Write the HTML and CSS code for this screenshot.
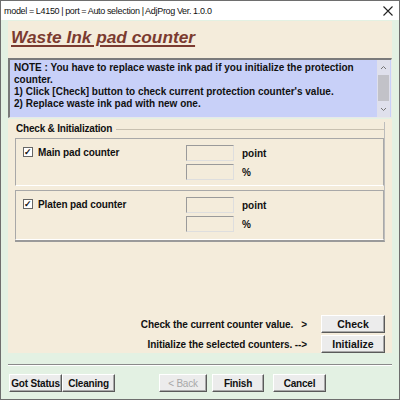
FILE: index.html
```html
<!DOCTYPE html>
<html>
<head>
<meta charset="utf-8">
<link rel="stylesheet" href="styles.css">
</head>
<body>
<div class="window">
  <div class="titlebar">
    <span class="title">model = L4150 | port = Auto selection | AdjProg Ver. 1.0.0</span>
    <svg class="close" width="10" height="10" viewBox="0 0 10 10"><path d="M0.5 0.5 L9.5 9.5 M9.5 0.5 L0.5 9.5" stroke="#222" stroke-width="1.1" fill="none"/></svg>
  </div>
  <div class="content">
    <div class="header"><span class="heading">Waste Ink pad counter</span></div>
    <div class="notice">
      <div class="notice-text">NOTE : You have to replace waste ink pad if you initialize the protection counter.<br>1) Click [Check] button to check current protection counter's value.<br>2) Replace waste ink pad with new one.</div>
      <div class="scrollbar">
        <svg width="13" height="10" viewBox="0 0 13 10"><path d="M4 6 L6.5 3.5 L9 6" stroke="#777" stroke-width="1" fill="none"/></svg>
        <div class="thumb"></div>
        <div class="track"></div>
        <svg width="13" height="10" viewBox="0 0 13 10"><path d="M4 4 L6.5 6.5 L9 4" stroke="#777" stroke-width="1" fill="none"/></svg>
      </div>
    </div>
    <div class="panel">
      <div class="group">
        <div class="group-label">Check &amp; Initialization</div>
        <div class="sub">
          <label class="chk"><span class="box">✓</span>Main pad counter</label>
          <div class="fields">
            <div class="field"><span class="input"></span><span class="unit">point</span></div>
            <div class="field"><span class="input"></span><span class="unit">%</span></div>
          </div>
        </div>
        <div class="sub">
          <label class="chk"><span class="box">✓</span>Platen pad counter</label>
          <div class="fields">
            <div class="field"><span class="input"></span><span class="unit">point</span></div>
            <div class="field"><span class="input"></span><span class="unit">%</span></div>
          </div>
        </div>
      </div>
      <div class="actions">
        <div class="action"><span>Check the current counter value.&nbsp;&nbsp;&nbsp;&gt;</span><button class="btn wide">Check</button></div>
        <div class="action"><span>Initialize the selected counters. --&gt;</span><button class="btn wide">Initialize</button></div>
      </div>
    </div>
    <div class="separator"></div>
    <div class="footer">
      <button class="btn">Got Status</button>
      <button class="btn">Cleaning</button>
      <button class="btn back" disabled>&lt; Back</button>
      <button class="btn finish">Finish</button>
      <button class="btn cancel">Cancel</button>
    </div>
  </div>
</div>
</body>
</html>
```
FILE: styles.css
```css
* { box-sizing: border-box; }
html, body { margin: 0; padding: 0; }
body {
  width: 400px;
  height: 400px;
  font-family: "Liberation Sans", Arial, sans-serif;
  font-size: 10px;
  color: #111;
}
.window {
  width: 400px;
  height: 400px;
  border: 1px solid #6e6e6e;
  background: #e3f1e3;
  display: flex;
  flex-direction: column;
}
.titlebar {
  height: 19px;
  background: #fff;
  display: flex;
  align-items: center;
  justify-content: space-between;
  padding: 0 6px 0 3px;
  font-size: 9px;
  color: #111;
}
.title { letter-spacing: -0.3px; word-spacing: -0.3px; }
.content {
  padding: 0 7px;
  display: flex;
  flex-direction: column;
}
.header {
  margin-top: 1px;
  height: 37px;
  background: #f4ecdb;
  padding: 6px 0 0 3px;
}
.heading {
  font-size: 17.3px;
  font-weight: bold;
  font-style: italic;
  color: #7b3b30;
  text-decoration: underline;
  text-decoration-thickness: 2px;
  text-underline-offset: 2px;
}
.notice {
  height: 60px;
  background: #c8d0f8;
  border-top: 2px solid #7a7a7a;
  border-left: 2px solid #7a7a7a;
  border-right: 1px solid #e8e8e8;
  border-bottom: 1px solid #e8e8e8;
  display: flex;
}
.notice-text {
  flex: 1;
  padding: 2px 4px;
  font-weight: bold;
  font-size: 10px;
  line-height: 12px;
  letter-spacing: 0;
}
.scrollbar {
  width: 13px;
  background: #dfe0ec;
  display: flex;
  flex-direction: column;
  align-items: center;
  padding: 3px 0;
  margin-right: 1px;
}
.thumb {
  width: 11px;
  height: 26px;
  margin: 2px 0 0;
  background: #c2c2c8;
}
.track { flex: 1; }
.panel {
  margin-top: 1px;
  height: 234px;
  background: #f4ecdb;
  padding: 3px 7px 0 7px;
  display: flex;
  flex-direction: column;
}
.group {
  border-bottom: 2px solid #9a9a9a;
  border-right: 1px solid #bcbcbc;
}
.group-label {
  font-weight: bold;
  height: 14px;
  line-height: 14px;
  display: flex;
  align-items: center;
  padding-left: 1px;
  letter-spacing: -0.2px;
}
.group-label::after {
  content: "";
  flex: 1;
  height: 1px;
  background: #c8c0b0;
  margin-left: 4px;
}
.sub {
  margin-top: 2px;
  height: 48px;
  border: 1px solid #a8a8a8;
  border-bottom-color: #fff;
  display: flex;
  padding: 6px 0 0 7px;
}
.sub + .sub { margin-top: 4px; height: 50px; }
.chk {
  width: 163px;
  display: flex;
  align-items: flex-start;
  font-weight: bold;
  font-size: 10px;
  padding-top: 2px;
  letter-spacing: -0.1px;
}
.box {
  width: 10px;
  height: 10px;
  border: 1px solid #666;
  background: #fff;
  font-size: 9px;
  line-height: 8px;
  text-align: center;
  margin-right: 5px;
  font-weight: bold;
}
.fields {
  display: flex;
  flex-direction: column;
  gap: 3px;
}
.field {
  display: flex;
  align-items: center;
  height: 16px;
}
.input {
  width: 48px;
  height: 16px;
  border-top: 1px solid #9a9a9a;
  border-left: 1px solid #9a9a9a;
  border-right: 1px solid #dedede;
  border-bottom: 1px solid #dedede;
  background: #f4ecdb;
  margin-right: 8px;
}
.unit { font-weight: bold; }
.actions {
  margin-top: auto;
  display: flex;
  flex-direction: column;
  gap: 2px;
}
.action {
  display: flex;
  justify-content: flex-end;
  align-items: center;
  font-weight: bold;
  letter-spacing: -0.1px;
}
.action span { margin-right: 14px; }
.btn {
  font-family: "Liberation Sans", Arial, sans-serif;
  font-size: 10.5px;
  font-weight: bold;
  color: #111;
  height: 18px;
  padding: 0;
  white-space: nowrap;
  background: #ececec;
  border: 1px solid #fff;
  border-right-color: #5a5a5a;
  border-bottom-color: #5a5a5a;
  box-shadow: inset -1px -1px 0 #a8a8a8;
  width: 53px;
}
.footer .btn { font-size: 10px; letter-spacing: -0.2px; }
.btn.wide { width: 64px; }
.separator {
  margin-top: 11px;
  height: 2px;
  border-top: 1px solid #8a8a8a;
  border-bottom: 1px solid #fff;
}
.footer {
  margin-top: 8px;
  display: flex;
  padding-left: 1px;
}
.footer .btn.back {
  margin-left: 44px;
  width: 48px;
  color: #a8a8a8;
  font-weight: normal;
}
.btn.finish { margin-left: 5px; width: 52px; }
.btn.cancel { margin-left: 9px; }
```
